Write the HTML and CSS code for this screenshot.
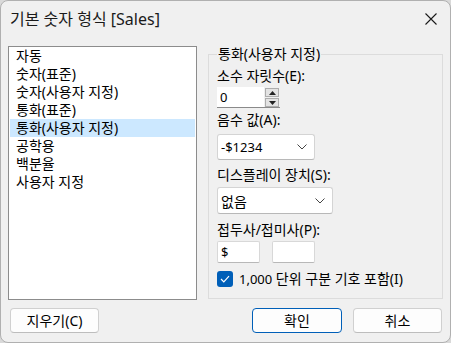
FILE: index.html
```html
<!DOCTYPE html>
<html lang="ko">
<head>
  <meta charset="utf-8">
  <title>기본 숫자 형식 [Sales]</title>
  <link rel="stylesheet" href="styles.css">
</head>
<body>
  <div class="dialog">
    <div class="titlebar">
      <span class="title">기본 숫자 형식 [Sales]</span>
      <span class="close">
        <svg width="12" height="12" viewBox="0 0 12 12"><path d="M0.5 0.5 L11.5 11.5 M11.5 0.5 L0.5 11.5" stroke="#1a1a1a" stroke-width="1.1" fill="none"/></svg>
      </span>
    </div>

    <div class="content">
      <ul class="format-list">
        <li>자동</li>
        <li>숫자(표준)</li>
        <li>숫자(사용자 지정)</li>
        <li>통화(표준)</li>
        <li class="selected">통화(사용자 지정)</li>
        <li>공학용</li>
        <li>백분율</li>
        <li>사용자 지정</li>
      </ul>

      <fieldset class="options">
        <legend>통화(사용자 지정)</legend>

        <label class="field-label lbl-decimals">소수 자릿수(E):</label>
        <div class="spinner">
          <div class="spin-value">0</div>
          <div class="spin-buttons">
            <div class="spin-btn">
              <svg width="7" height="4" viewBox="0 0 7 4"><path d="M0 4 L3.5 0 L7 4 Z" fill="#222"/></svg>
            </div>
            <div class="spin-btn">
              <svg width="7" height="4" viewBox="0 0 7 4"><path d="M0 0 L3.5 4 L7 0 Z" fill="#222"/></svg>
            </div>
          </div>
        </div>

        <label class="field-label lbl-negative">음수 값(A):</label>
        <div class="combo combo-negative">
          <span class="latin">-$1234</span>
          <svg width="10" height="6" viewBox="0 0 10 6"><path d="M0.5 0.5 L5 5 L9.5 0.5" stroke="#444" stroke-width="1" fill="none"/></svg>
        </div>

        <label class="field-label lbl-display">디스플레이 장치(S):</label>
        <div class="combo combo-display">
          <span>없음</span>
          <svg width="10" height="6" viewBox="0 0 10 6"><path d="M0.5 0.5 L5 5 L9.5 0.5" stroke="#444" stroke-width="1" fill="none"/></svg>
        </div>

        <label class="field-label lbl-affix">접두사/접미사(P):</label>
        <div class="affix-row">
          <div class="textbox latin">$</div>
          <div class="textbox"></div>
        </div>

        <div class="check-row">
          <span class="checkbox">
            <svg width="10" height="8" viewBox="0 0 10 8"><path d="M1 4 L3.8 6.8 L9 1.2" stroke="#fff" stroke-width="1.2" fill="none"/></svg>
          </span>
          <span><span class="latin">1,000</span> 단위 구분 기호 포함(I)</span>
        </div>
      </fieldset>
    </div>

    <div class="footer">
      <button class="btn">지우기(C)</button>
      <div class="footer-right">
        <button class="btn btn-default">확인</button>
        <button class="btn">취소</button>
      </div>
    </div>
  </div>
</body>
</html>
```

FILE: styles.css
```css
* {
  box-sizing: border-box;
}

body {
  margin: 0;
  padding: 0;
  background-color: #d9d9d9;
  font-family: 'Noto Sans', 'Noto Sans CJK KR', sans-serif;
  font-size: 14px;
  color: #000;
}

.latin {
  font-size: 13px;
}

.dialog {
  width: 451px;
  height: 343px;
  background-color: #f0f0f0;
  border: 1px solid #b0b0b0;
  border-radius: 8px;
  overflow: hidden;
}

.titlebar {
  height: 36px;
  padding-left: 9px;
  padding-right: 13px;
  display: flex;
  align-items: center;
  justify-content: space-between;
}

.title {
  font-size: 16px;
  line-height: 20px;
  color: #1a1a1a;
}

.close {
  display: flex;
}

.content {
  display: flex;
  gap: 11px;
  padding: 9px 7px 0 7px;
}

.format-list {
  list-style: none;
  margin: 0;
  padding: 0 1px;
  width: 189px;
  height: 254px;
  background-color: #fff;
  border: 1px solid #8c8c8c;
}

.format-list li {
  height: 18px;
  line-height: 18px;
  padding-left: 6px;
}

.format-list li.selected {
  background-color: #cce8ff;
}

.options {
  width: 235px;
  height: 253px;
  margin: 0;
  padding: 0 8px;
  border: 1px solid #dcdcdc;
  display: flex;
  flex-direction: column;
  align-items: flex-start;
}

.options legend {
  padding: 0 1px;
  line-height: 16px;
}

.field-label {
  display: block;
  line-height: 18px;
}

.lbl-decimals { margin-top: 5px; }
.lbl-negative { margin-top: 3px; }
.lbl-display { margin-top: 6px; }
.lbl-affix { margin-top: 7px; }

.spinner {
  margin-top: 2px;
  display: flex;
  height: 21px;
  font-size: 13px;
}

.spin-value {
  width: 47px;
  background-color: #fff;
  border-bottom: 1px solid #8a8a8a;
  padding-left: 3px;
  line-height: 20px;
}

.spin-buttons {
  width: 16px;
  display: flex;
  flex-direction: column;
  gap: 1px;
  padding: 1px 1px 0 1px;
  background-color: #f0f0f0;
  border-bottom: 1px solid #8a8a8a;
}

.spin-btn {
  flex: 1;
  display: flex;
  align-items: center;
  justify-content: center;
  background-color: #e3e3e3;
  border: 1px solid #adadad;
}

.combo {
  margin-top: 5px;
  height: 26px;
  background-color: #fff;
  border: 1px solid #d4d4d4;
  border-bottom-color: #b8b8b8;
  border-radius: 3px;
  padding: 0 7px 0 3px;
  display: flex;
  align-items: center;
  justify-content: space-between;
}

.combo-negative {
  width: 98px;
}

.combo-display {
  width: 116px;
  margin-top: 3px;
  height: 27px;
}

.affix-row {
  margin-top: 2px;
  display: flex;
  gap: 12px;
}

.textbox {
  width: 43px;
  height: 22px;
  background-color: #fff;
  border: 1px solid #d8d8d8;
  border-bottom-color: #b8b8b8;
  border-radius: 2px;
  padding-left: 3px;
  line-height: 20px;
}

.check-row {
  margin-top: 8px;
  display: flex;
  align-items: center;
  gap: 6px;
  line-height: 16px;
}

.checkbox {
  width: 16px;
  height: 16px;
  border-radius: 3px;
  background-color: #005fb8;
  display: flex;
  align-items: center;
  justify-content: center;
}

.footer {
  display: flex;
  justify-content: space-between;
  padding: 8px 8px 0 9px;
}

.footer-right {
  display: flex;
  gap: 11px;
}

.btn {
  width: 89px;
  height: 25px;
  font-family: 'Noto Sans', 'Noto Sans CJK KR', sans-serif;
  font-size: 14px;
  line-height: 18px;
  color: #000;
  background-color: #fdfdfd;
  border: 1px solid #d0d0d0;
  border-bottom-color: #bdbdbd;
  border-radius: 4px;
  padding: 0;
}

.btn-default {
  width: 90px;
  border: 1px solid #005fb8;
}
```
